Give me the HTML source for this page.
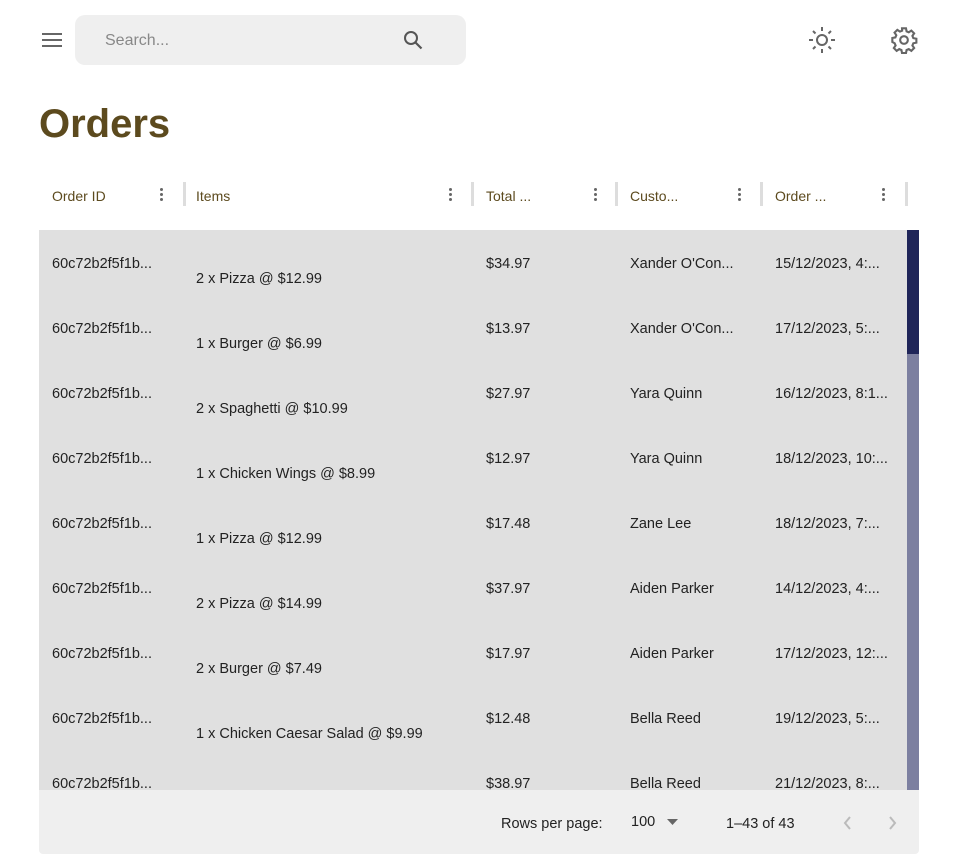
<!DOCTYPE html><html><head><style>
body{margin:0;width:960px;height:854px;background:#fff;font-family:"Liberation Sans",sans-serif;position:relative;overflow:hidden;color:#222}
.a{position:absolute;white-space:nowrap}
.search{left:75px;top:15px;width:391px;height:50px;background:#efefef;border-radius:10px}
.hd{font-size:14px;color:#5c4a1e;top:188px}
.sep{top:182px;width:3px;height:24px;background:#ddd}
.keb{top:188px;width:3px}
.keb i{display:block;width:3px;height:3px;border-radius:50%;background:#666;margin-bottom:2px}
.c{font-size:14.5px;color:#222}
</style></head><body>
<svg class="a" style="left:41px;top:31px" width="22" height="18"><path d="M1 3h20M1 9h20M1 15h20" stroke="#666" stroke-width="2"/></svg>
<div class="a search"></div>
<div class="a" style="left:105px;top:32px;font-size:16px;color:#888">Search...</div>
<svg class="a" style="left:402px;top:29px" width="22" height="22"><circle cx="9" cy="9" r="6" stroke="#555" stroke-width="2" fill="none"/><path d="M13.5 13.5l6 6" stroke="#555" stroke-width="2.2"/></svg>
<svg class="a" style="left:808px;top:26px" width="28" height="28"><circle cx="14" cy="14" r="5" stroke="#666" stroke-width="2" fill="none"/><g stroke="#666" stroke-width="2"><path d="M14 1v4M14 23v4M1 14h4M23 14h4M5 5l2.5 2.5M20.5 20.5L23 23M5 23l2.5-2.5M20.5 7.5L23 5"/></g></svg>
<svg class="a" style="left:890px;top:26px" width="28" height="28" viewBox="0 0 24 24"><path fill="none" stroke="#666" stroke-width="1.8" d="M10.3 2h3.4l.5 2.6 1.9.8 2.2-1.5 2.4 2.4-1.5 2.2.8 1.9 2.6.5v3.4l-2.6.5-.8 1.9 1.5 2.2-2.4 2.4-2.2-1.5-1.9.8-.5 2.6h-3.4l-.5-2.6-1.9-.8-2.2 1.5-2.4-2.4 1.5-2.2-.8-1.9L2 13.7v-3.4l2.6-.5.8-1.9-1.5-2.2 2.4-2.4 2.2 1.5 1.9-.8z"/><circle cx="12" cy="12" r="3.3" fill="none" stroke="#666" stroke-width="1.8"/></svg>
<div class="a" style="left:39px;top:102px;font-size:40px;font-weight:bold;color:#5c4a1e">Orders</div>
<div class="a hd" style="left:52px">Order ID</div>
<div class="a hd" style="left:196px">Items</div>
<div class="a hd" style="left:486px">Total ...</div>
<div class="a hd" style="left:630px">Custo...</div>
<div class="a hd" style="left:775px">Order ...</div>
<div class="a keb" style="left:160px"><i></i><i></i><i></i></div>
<div class="a keb" style="left:449px"><i></i><i></i><i></i></div>
<div class="a keb" style="left:594px"><i></i><i></i><i></i></div>
<div class="a keb" style="left:738px"><i></i><i></i><i></i></div>
<div class="a keb" style="left:882px"><i></i><i></i><i></i></div>
<div class="a sep" style="left:183px"></div><div class="a sep" style="left:471px"></div><div class="a sep" style="left:615px"></div><div class="a sep" style="left:760px"></div><div class="a sep" style="left:905px"></div>
<div class="a" style="left:39px;top:230px;width:868px;height:560px;background:#e0e0e0;overflow:hidden" id="b"></div>
<div class="a" style="left:907px;top:230px;width:12px;height:560px;background:#7c7fa0"></div>
<div class="a" style="left:907px;top:230px;width:12px;height:124px;background:#1f2559"></div>
<div class="a" style="left:39px;top:790px;width:880px;height:64px;background:#efefef;border-radius:0 0 4px 4px"></div>
<div class="a" style="left:501px;top:816px;font-size:14.5px">Rows per page:</div>
<div class="a" style="left:631px;top:814px;font-size:14.5px">100</div>
<svg class="a" style="left:667px;top:819px" width="12" height="7"><path d="M0 0h11L5.5 6z" fill="#666"/></svg>
<div class="a" style="left:726px;top:816px;font-size:14.5px">1–43 of 43</div>
<svg class="a" style="left:842px;top:815px" width="10" height="16"><path d="M8 2L3 8l5 6" stroke="#bbb" stroke-width="2" fill="none"/></svg>
<svg class="a" style="left:888px;top:815px" width="10" height="16"><path d="M2 2l5 6-5 6" stroke="#bbb" stroke-width="2" fill="none"/></svg>
<script>
var r=[["2 x Pizza @ $12.99","$34.97","Xander O'Con...","15/12/2023, 4:..."],["1 x Burger @ $6.99","$13.97","Xander O'Con...","17/12/2023, 5:..."],["2 x Spaghetti @ $10.99","$27.97","Yara Quinn","16/12/2023, 8:1..."],["1 x Chicken Wings @ $8.99","$12.97","Yara Quinn","18/12/2023, 10:..."],["1 x Pizza @ $12.99","$17.48","Zane Lee","18/12/2023, 7:..."],["2 x Pizza @ $14.99","$37.97","Aiden Parker","14/12/2023, 4:..."],["2 x Burger @ $7.49","$17.97","Aiden Parker","17/12/2023, 12:..."],["1 x Chicken Caesar Salad @ $9.99","$12.48","Bella Reed","19/12/2023, 5:..."],["","$38.97","Bella Reed","21/12/2023, 8:..."]];
var h="";r.forEach(function(x,i){var t=i*65+26;h+='<div class="a c" style="left:13px;top:'+t+'px">60c72b2f5f1b...</div><div class="a c" style="left:157px;top:'+(t+15)+'px">'+x[0]+'</div><div class="a c" style="left:447px;top:'+t+'px">'+x[1]+'</div><div class="a c" style="left:591px;top:'+t+'px">'+x[2]+'</div><div class="a c" style="left:736px;top:'+t+'px">'+x[3]+'</div>';});
document.getElementById("b").innerHTML=h;
</script>
</body></html>
